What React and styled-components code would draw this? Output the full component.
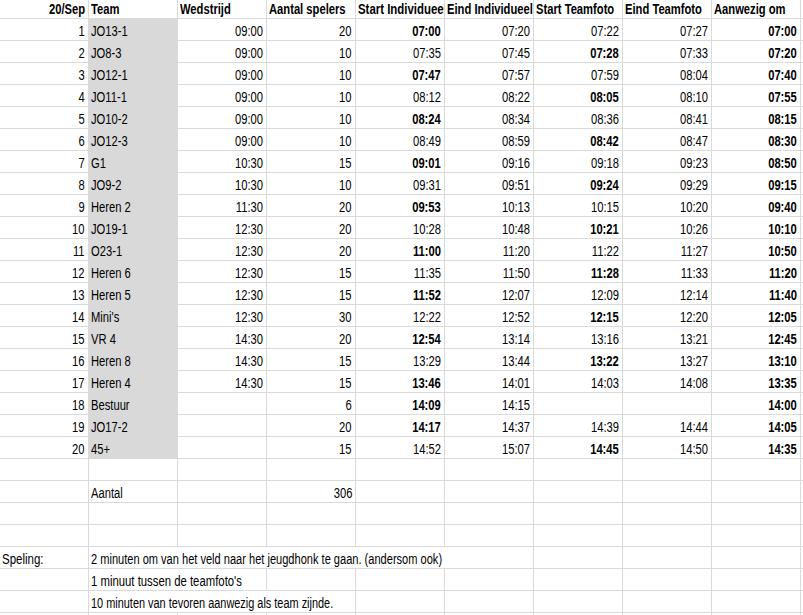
import React from 'react'
import styled, { createGlobalStyle } from 'styled-components'

const GlobalStyle = createGlobalStyle`
  html, body {
    margin: 0;
    padding: 0;
    background: #ffffff;
  }
  body {
    font-family: "Liberation Sans", Arial, sans-serif;
    color: #000000;
  }
`

const Sheet = styled.div`
  display: grid;
  grid-template-columns: repeat(9, 89px) 1fr;
  grid-template-rows: 19px;
  grid-auto-rows: 22px;
  width: 803px;
  height: 615px;
  overflow: hidden;
  background: #ffffff;
`

const Cell = styled.div`
  box-sizing: border-box;
  display: flex;
  align-items: flex-end;
  justify-content: ${(p) => (p.$align === 'right' ? 'flex-end' : 'flex-start')};
  grid-column: ${(p) => (p.$span ? `span ${p.$span}` : 'auto')};
  padding: 0 3px 1px 2px;
  border-right: 1px solid ${(p) => (p.$fill ? '#d9d9d9' : '#dadada')};
  border-bottom: 1px solid ${(p) => (p.$fill ? '#d9d9d9' : '#dadada')};
  background: ${(p) => (p.$fill ? '#d9d9d9' : '#ffffff')};
  font-size: 14px;
  line-height: 16px;
  font-weight: ${(p) => (p.$bold ? 700 : 400)};
  white-space: nowrap;
  overflow: hidden;
`

// narrow face: Aptos Narrow is not installed, so squeeze Liberation Sans
const Text = styled.span`
  display: inline-block;
  flex-shrink: 0;
  transform: scaleX(${(p) => p.$scale || 0.8});
  transform-origin: ${(p) => (p.$align === 'right' ? 'right' : 'left')} bottom;
`

const C = ({ children, align, bold, fill, span, scale }) => (
  <Cell $align={align} $bold={bold} $fill={fill} $span={span}>
    {children !== undefined && children !== '' && (
      <Text $align={align} $scale={scale}>
        {children}
      </Text>
    )}
  </Cell>
)

const headers = [
  ['20/Sep', 'right'],
  ['Team', 'left'],
  ['Wedstrijd', 'left'],
  ['Aantal spelers', 'left'],
  ['Start Individueel', 'left', 0.815],
  ['Eind Individueel', 'left'],
  ['Start Teamfoto', 'left'],
  ['Eind Teamfoto', 'left'],
  ['Aanwezig om', 'left'],
  ['', 'left'],
]

// times starting with * are bold
const rows = [
  ['JO13-1', '09:00', '20', '*07:00', '07:20', '07:22', '07:27', '07:00'],
  ['JO8-3', '09:00', '10', '07:35', '07:45', '*07:28', '07:33', '07:20'],
  ['JO12-1', '09:00', '10', '*07:47', '07:57', '07:59', '08:04', '07:40'],
  ['JO11-1', '09:00', '10', '08:12', '08:22', '*08:05', '08:10', '07:55'],
  ['JO10-2', '09:00', '10', '*08:24', '08:34', '08:36', '08:41', '08:15'],
  ['JO12-3', '09:00', '10', '08:49', '08:59', '*08:42', '08:47', '08:30'],
  ['G1', '10:30', '15', '*09:01', '09:16', '09:18', '09:23', '08:50'],
  ['JO9-2', '10:30', '10', '09:31', '09:51', '*09:24', '09:29', '09:15'],
  ['Heren 2', '11:30', '20', '*09:53', '10:13', '10:15', '10:20', '09:40'],
  ['JO19-1', '12:30', '20', '10:28', '10:48', '*10:21', '10:26', '10:10'],
  ['O23-1', '12:30', '20', '*11:00', '11:20', '11:22', '11:27', '10:50'],
  ['Heren 6', '12:30', '15', '11:35', '11:50', '*11:28', '11:33', '11:20'],
  ['Heren 5', '12:30', '15', '*11:52', '12:07', '12:09', '12:14', '11:40'],
  ["Mini's", '12:30', '30', '12:22', '12:52', '*12:15', '12:20', '12:05'],
  ['VR 4', '14:30', '20', '*12:54', '13:14', '13:16', '13:21', '12:45'],
  ['Heren 8', '14:30', '15', '13:29', '13:44', '*13:22', '13:27', '13:10'],
  ['Heren 4', '14:30', '15', '*13:46', '14:01', '14:03', '14:08', '13:35'],
  ['Bestuur', '', '6', '*14:09', '14:15', '', '', '14:00'],
  ['JO17-2', '', '20', '*14:17', '14:37', '14:39', '14:44', '14:05'],
  ['45+', '', '15', '14:52', '15:07', '*14:45', '14:50', '14:35'],
]

const Blank = ({ count, id }) =>
  Array.from({ length: count }, (_, i) => <Cell key={`${id}-${i}`} />)

const Time = ({ value, bold }) => (
  <C align="right" bold={bold || value.startsWith('*')}>
    {value.replace('*', '')}
  </C>
)

export default function App() {
  return (
    <>
      <GlobalStyle />
      <Sheet>
        {headers.map(([label, align, scale], i) => (
          <C key={`h${i}`} align={align} scale={scale} bold>
            {label}
          </C>
        ))}

        {rows.map((r, i) => (
          <React.Fragment key={`r${i}`}>
            <C align="right">{i + 1}</C>
            <C fill>{r[0]}</C>
            <C align="right">{r[1]}</C>
            <C align="right">{r[2]}</C>
            <Time value={r[3]} />
            <Time value={r[4]} />
            <Time value={r[5]} />
            <Time value={r[6]} />
            <Time value={r[7]} bold />
            <Cell />
          </React.Fragment>
        ))}

        <Blank count={10} id="e1" />

        <Cell />
        <C>Aantal</C>
        <Cell />
        <C align="right">306</C>
        <Blank count={6} id="e2" />

        <Blank count={20} id="e3" />

        <C scale={0.82}>Speling:</C>
        <C span={5} scale={0.79}>
          2 minuten om van het veld naar het jeugdhonk te gaan. (andersom ook)
        </C>
        <Blank count={4} id="s1" />

        <Cell />
        <C span={2} scale={0.81}>
          1 minuut tussen de teamfoto's
        </C>
        <Blank count={7} id="s2" />

        <Cell />
        <C span={3} scale={0.78}>
          10 minuten van tevoren aanwezig als team zijnde.
        </C>
        <Blank count={6} id="s3" />

        <Blank count={10} id="e4" />
      </Sheet>
    </>
  )
}
